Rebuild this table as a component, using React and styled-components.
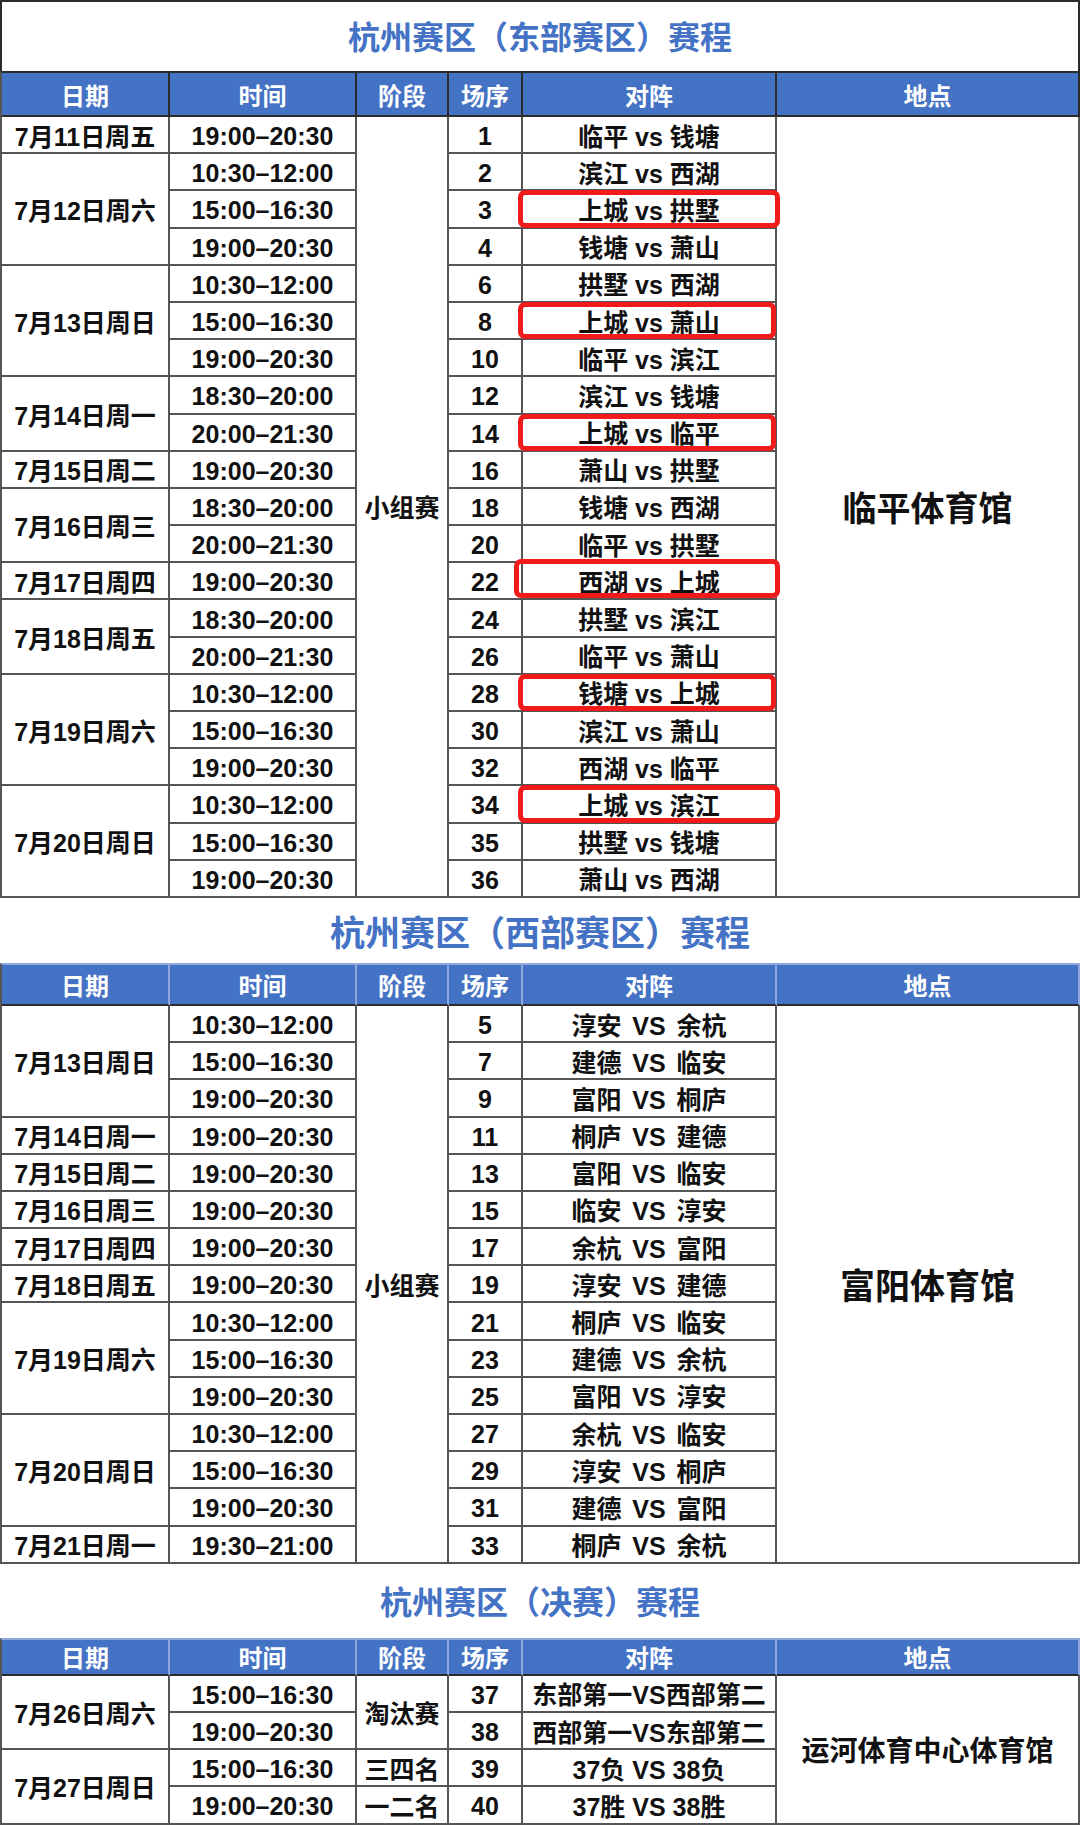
import React from "react";
import styled, { createGlobalStyle } from "styled-components";

const GlobalStyle = createGlobalStyle`
  html, body {
    margin: 0;
    padding: 0;
    background: #fff;
  }
  * {
    box-sizing: border-box;
  }
`;

const FONT = '"Liberation Sans", "Noto Sans CJK SC", sans-serif';
const BLUE = "#4472c4";
const LINE = "#555";

const east = {
  title: "杭州赛区（东部赛区）赛程",
  titleH: 71,
  titleSize: 32,
  titleShift: 4,
  framed: true,
  headH: 46,
  headLine: "#2b2b2b",
  venue: "临平体育馆",
  venueSize: 34,
  stages: [{ label: "小组赛", span: 21 }],
  days: [
    { date: "7月11日周五", slots: [["19:00–20:30", 1, "临平 vs 钱塘"]] },
    {
      date: "7月12日周六",
      slots: [
        ["10:30–12:00", 2, "滨江 vs 西湖"],
        ["15:00–16:30", 3, "上城 vs 拱墅", { l: -5, r: -5, t: -1, b: -1 }],
        ["19:00–20:30", 4, "钱塘 vs 萧山"],
      ],
    },
    {
      date: "7月13日周日",
      slots: [
        ["10:30–12:00", 6, "拱墅 vs 西湖"],
        ["15:00–16:30", 8, "上城 vs 萧山", { l: -5, r: -1, t: -1, b: -1 }],
        ["19:00–20:30", 10, "临平 vs 滨江"],
      ],
    },
    {
      date: "7月14日周一",
      slots: [
        ["18:30–20:00", 12, "滨江 vs 钱塘"],
        ["20:00–21:30", 14, "上城 vs 临平", { l: -5, r: -1, t: -1, b: -1 }],
      ],
    },
    { date: "7月15日周二", slots: [["19:00–20:30", 16, "萧山 vs 拱墅"]] },
    {
      date: "7月16日周三",
      slots: [
        ["18:30–20:00", 18, "钱塘 vs 西湖"],
        ["20:00–21:30", 20, "临平 vs 拱墅"],
      ],
    },
    {
      date: "7月17日周四",
      slots: [["19:00–20:30", 22, "西湖 vs 上城", { l: -9, r: -5, t: -4, b: 0 }]],
    },
    {
      date: "7月18日周五",
      slots: [
        ["18:30–20:00", 24, "拱墅 vs 滨江"],
        ["20:00–21:30", 26, "临平 vs 萧山"],
      ],
    },
    {
      date: "7月19日周六",
      slots: [
        ["10:30–12:00", 28, "钱塘 vs 上城", { l: -5, r: -1, t: -1, b: -1 }],
        ["15:00–16:30", 30, "滨江 vs 萧山"],
        ["19:00–20:30", 32, "西湖 vs 临平"],
      ],
    },
    {
      date: "7月20日周日",
      slots: [
        ["10:30–12:00", 34, "上城 vs 滨江", { l: -5, r: -5, t: -1, b: -1 }],
        ["15:00–16:30", 35, "拱墅 vs 钱塘"],
        ["19:00–20:30", 36, "萧山 vs 西湖"],
      ],
    },
  ],
};

const west = {
  title: "杭州赛区（西部赛区）赛程",
  titleH: 65,
  titleSize: 35,
  titleShift: 0,
  headH: 43,
  headLine: "#8fa9dc",
  venue: "富阳体育馆",
  venueSize: 35,
  wordSpace: 4,
  stages: [{ label: "小组赛", span: 15 }],
  days: [
    {
      date: "7月13日周日",
      slots: [
        ["10:30–12:00", 5, "淳安 VS 余杭"],
        ["15:00–16:30", 7, "建德 VS 临安"],
        ["19:00–20:30", 9, "富阳 VS 桐庐"],
      ],
    },
    { date: "7月14日周一", slots: [["19:00–20:30", 11, "桐庐 VS 建德"]] },
    { date: "7月15日周二", slots: [["19:00–20:30", 13, "富阳 VS 临安"]] },
    { date: "7月16日周三", slots: [["19:00–20:30", 15, "临安 VS 淳安"]] },
    { date: "7月17日周四", slots: [["19:00–20:30", 17, "余杭 VS 富阳"]] },
    { date: "7月18日周五", slots: [["19:00–20:30", 19, "淳安 VS 建德"]] },
    {
      date: "7月19日周六",
      slots: [
        ["10:30–12:00", 21, "桐庐 VS 临安"],
        ["15:00–16:30", 23, "建德 VS 余杭"],
        ["19:00–20:30", 25, "富阳 VS 淳安"],
      ],
    },
    {
      date: "7月20日周日",
      slots: [
        ["10:30–12:00", 27, "余杭 VS 临安"],
        ["15:00–16:30", 29, "淳安 VS 桐庐"],
        ["19:00–20:30", 31, "建德 VS 富阳"],
      ],
    },
    { date: "7月21日周一", slots: [["19:30–21:00", 33, "桐庐 VS 余杭"]] },
  ],
};

const finals = {
  title: "杭州赛区（决赛）赛程",
  titleH: 74,
  titleSize: 32,
  titleShift: 2,
  headH: 38,
  headLine: "#8fa9dc",
  venue: "运河体育中心体育馆",
  venueSize: 28,
  stages: [
    { label: "淘汰赛", span: 2 },
    { label: "三四名", span: 1 },
    { label: "一二名", span: 1 },
  ],
  days: [
    {
      date: "7月26日周六",
      slots: [
        ["15:00–16:30", 37, "东部第一VS西部第二"],
        ["19:00–20:30", 38, "西部第一VS东部第二"],
      ],
    },
    {
      date: "7月27日周日",
      slots: [
        ["15:00–16:30", 39, "37负 VS 38负"],
        ["19:00–20:30", 40, "37胜 VS 38胜"],
      ],
    },
  ],
};

const heads = ["日期", "时间", "阶段", "场序", "对阵", "地点"];

const Sheet = styled.div`
  width: 1080px;
  font-family: ${FONT};
  background: #fff;
`;

const Title = styled.div`
  height: ${(p) => p.$h}px;
  padding-bottom: ${(p) => p.$shift}px;
  display: flex;
  align-items: center;
  justify-content: center;
  color: ${BLUE};
  font-size: ${(p) => p.$size}px;
  font-weight: 700;
  border: ${(p) => (p.$framed ? "2px solid #2b2b2b" : "none")};
  border-bottom: none;
`;

const Grid = styled.div`
  display: grid;
  grid-template-columns: 168px 187px 92px 74px 254px 303px;
  grid-template-rows: ${(p) => p.$headH - 2}px repeat(${(p) => p.$rows}, 37.2px);
  border-left: 2px solid ${LINE};
  border-top: 2px solid ${(p) => p.$line};
`;

const HeadCell = styled.div`
  display: flex;
  align-items: center;
  justify-content: center;
  background: ${BLUE};
  color: #fff;
  font-size: 24px;
  font-weight: 700;
  border-right: 2px solid ${(p) => p.$line};
  border-bottom: 2px solid #2b2b2b;
`;

const Cell = styled.div`
  grid-column: ${(p) => p.$col};
  grid-row: ${(p) => p.$row} / span ${(p) => p.$span || 1};
  position: relative;
  display: flex;
  align-items: center;
  justify-content: center;
  padding-top: ${(p) => (p.$latin ? 4 : 0)}px;
  border-right: 2px solid ${LINE};
  border-bottom: 2px solid ${LINE};
  color: #111;
  font-size: ${(p) => p.$size || 25}px;
  font-weight: 700;
  white-space: nowrap;
  word-spacing: ${(p) => p.$ws || 0}px;
`;

const RedBox = styled.span`
  position: absolute;
  left: ${(p) => p.$l}px;
  right: ${(p) => p.$r}px;
  top: ${(p) => p.$t}px;
  bottom: ${(p) => p.$b}px;
  border: 5px solid #f21b1b;
  border-radius: 7px;
  pointer-events: none;
`;

function Section({ data }) {
  const total = data.days.reduce((n, d) => n + d.slots.length, 0);
  const cells = [];
  let row = 2;
  data.days.forEach((day, di) => {
    cells.push(
      <Cell key={`d${di}`} $col={1} $row={row} $span={day.slots.length}>
        {day.date}
      </Cell>
    );
    day.slots.forEach(([time, no, match, box], si) => {
      const r = row + si;
      cells.push(
        <Cell key={`t${no}`} $col={2} $row={r} $latin>
          {time}
        </Cell>,
        <Cell key={`n${no}`} $col={4} $row={r} $latin>
          {no}
        </Cell>,
        <Cell key={`m${no}`} $col={5} $row={r} $ws={data.wordSpace}>
          {match}
          {box && <RedBox $l={box.l} $r={box.r} $t={box.t} $b={box.b} />}
        </Cell>
      );
    });
    row += day.slots.length;
  });
  let sRow = 2;
  data.stages.forEach((s, i) => {
    cells.push(
      <Cell key={`s${i}`} $col={3} $row={sRow} $span={s.span}>
        {s.label}
      </Cell>
    );
    sRow += s.span;
  });
  cells.push(
    <Cell key="venue" $col={6} $row={2} $span={total} $size={data.venueSize}>
      {data.venue}
    </Cell>
  );

  return (
    <>
      <Title
        $h={data.titleH}
        $size={data.titleSize}
        $shift={data.titleShift}
        $framed={data.framed}
      >
        {data.title}
      </Title>
      <Grid $headH={data.headH} $rows={total} $line={data.headLine}>
        {heads.map((h) => (
          <HeadCell key={h} $line={data.headLine}>
            {h}
          </HeadCell>
        ))}
        {cells}
      </Grid>
    </>
  );
}

export default function App() {
  return (
    <>
      <GlobalStyle />
      <Sheet>
        <Section data={east} />
        <Section data={west} />
        <Section data={finals} />
      </Sheet>
    </>
  );
}
